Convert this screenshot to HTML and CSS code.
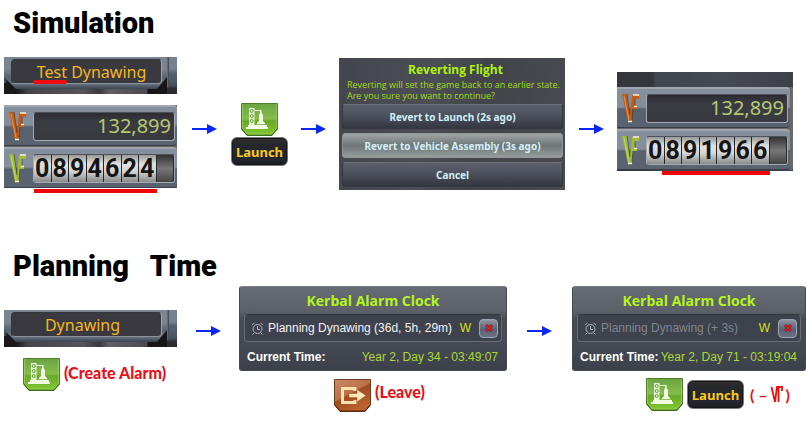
FILE: index.html
```html
<!DOCTYPE html>
<html lang="en">
<head>
<meta charset="utf-8">
<title>Simulation and Planning Time</title>
<link rel="stylesheet" href="styles.css">
</head>
<body>
<svg class="defs" aria-hidden="true">
  <defs>
    <linearGradient id="green" x1="0" y1="0" x2="0" y2="1">
      <stop offset="0" stop-color="#6ba343"/><stop offset=".48" stop-color="#86bd4c"/><stop offset=".54" stop-color="#66a928"/><stop offset="1" stop-color="#84c932"/>
    </linearGradient>
    <linearGradient id="brown" x1="0" y1="0" x2=".6" y2="1">
      <stop offset="0" stop-color="#c98a68"/><stop offset=".5" stop-color="#bb7048"/><stop offset=".54" stop-color="#a04a20"/><stop offset="1" stop-color="#bd642e"/>
    </linearGradient>
    <symbol id="arrow" viewBox="0 0 25 10">
      <path d="M0 5H17" stroke="#0a28f5" stroke-width="2"/><path d="M15 0 25 5 15 10Z" fill="#0a28f5"/>
    </symbol>
    <symbol id="pad" viewBox="0 0 37 33">
      <path d="M.5.5H36.5V26L31 32.500H6L.5 26Z" fill="url(#green)" stroke="#4d7f2a"/>
      <path d="M1 26 6 32H31L36 26" fill="none" stroke="#31600f"/>
      <path d="M1.500 1V25.500L6.500 31H30.500L35.500 25.500V1" fill="none" stroke="#a5d567" stroke-opacity=".6"/>
      <path d="M8 5H13.500V22H8Z" fill="#e9f6d5"/>
      <g fill="none" stroke="#5c9a32"><circle cx="10.700" cy="8" r="1.500"/><circle cx="10.700" cy="13" r="1.500"/><circle cx="10.700" cy="18" r="1.500"/></g>
      <path d="M13 7.500H19" stroke="#e9f6d5"/>
      <path d="M7 22H26V24H27V26H5V24H7Z" fill="#f1fae3"/>
      <path d="M19 7H20.500V10L22 12V18L24 20V22H16V20L18 18V12L19 10Z" fill="#f1fae3"/>
      <path d="M15 21.500H25" stroke="#8fc25c"/>
    </symbol>
    <symbol id="leave" viewBox="0 0 37 33">
      <path d="M.5.5H36.500V26L31 32.500H6L.5 26Z" fill="url(#brown)" stroke="#703a1c"/>
      <path d="M1 26 6 32H31L36 26" fill="none" stroke="#542209"/>
      <path d="M21 12V9.500H8.500V23.500H21V21" fill="none" stroke="#fbe3b0" stroke-width="3"/>
      <path d="M15 14.500H23V10.500L32 16.500 23 23V18.500H15Z" fill="#ffe9b8" stroke="#a2542c" stroke-width=".5"/>
    </symbol>
    <symbol id="root" viewBox="0 0 20 32">
      <path d="M1 2H6L9 23 11 3H18V7H14V14H16V17H14L12 17 11 30H7Z" fill="currentColor"/>
      <path d="M3 4 8 28" stroke="#fff" stroke-opacity=".35"/>
      <path d="M6 2 9 23M14 7V14M12 17 11 28" fill="none" stroke="#222" stroke-opacity=".5"/>
      <path d="M12 3H18M13 14.500H16M7 29.500H11" stroke="#fbf0cf" stroke-width="1.500"/>
    </symbol>
    <symbol id="clock" viewBox="0 0 13 13">
      <g fill="none" stroke="#a9b4bd"><circle cx="6.500" cy="7" r="4.500"/><path d="M6.500 4V7.500H9M1 3 3.500 1M12 3 9.500 1M3 11 1.500 12.500M10 11 11.500 12.500"/></g>
    </symbol>
    <symbol id="cross" viewBox="0 0 10 10">
      <path d="M2 2 8 8M8 2 2 8" stroke="#66202b" stroke-width="3"/><path d="M2 2 8 8M8 2 2 8" stroke="#e8202c" stroke-width="1.500"/>
    </symbol>
    <symbol id="redroot" viewBox="0 0 14 20">
      <path d="M1.500 2 5 17 7 2H12V6M8.500 3V17" fill="none" stroke="#ee0c0c" stroke-width="1.800"/>
    </symbol>
  </defs>
</svg>
<main>
  <section>
    <h1>Simulation</h1>
    <div class="flow simulation">
      <div class="stack">
        <div class="plate"><div class="frame"><div class="plate-name name-long"><span class="marked">Test</span> Dynawing</div></div></div>
        <div class="counter">
          <div class="bank"><svg class="root orange"><use href="#root"/></svg><div class="funds">132,899</div></div>
          <div class="bank"><svg class="root lime"><use href="#root"/></svg><div class="reels"><b>0</b><b>8</b><b>9</b><b>4</b><b>6</b><b>2</b><b>4</b><i></i></div></div>
        </div>
        <div class="underline full"></div>
      </div>
      <svg class="arrow"><use href="#arrow"/></svg>
      <div class="launching">
        <svg class="tile"><use href="#pad"/></svg>
        <button class="launch" type="button">Launch</button>
      </div>
      <svg class="arrow"><use href="#arrow"/></svg>
      <div class="dialog" role="dialog" aria-labelledby="revert-title">
        <h2 id="revert-title">Reverting Flight</h2>
        <p>Reverting will set the game back to an earlier state.<br>Are you sure you want to continue?</p>
        <button type="button">Revert to Launch (2s ago)</button>
        <button class="hover" type="button">Revert to Vehicle Assembly (3s ago)</button>
        <button type="button">Cancel</button>
      </div>
      <svg class="arrow"><use href="#arrow"/></svg>
      <div class="result">
        <div class="scene">
          <div class="counter">
            <div class="bank"><svg class="root orange"><use href="#root"/></svg><div class="funds">132,899</div></div>
            <div class="bank"><svg class="root lime"><use href="#root"/></svg><div class="reels"><b>0</b><b>8</b><b>9</b><b>1</b><b>9</b><b>6</b><b>6</b><i></i></div></div>
          </div>
        </div>
        <div class="underline part"></div>
      </div>
    </div>
  </section>
  <section>
    <h1>Planning&nbsp;&nbsp; Time</h1>
    <div class="flow planning">
      <div class="alarm-step">
        <div class="plate"><div class="frame"><div class="plate-name">Dynawing</div></div></div>
        <div class="action"><svg class="tile"><use href="#pad"/></svg><span>(Create Alarm)</span></div>
      </div>
      <svg class="arrow"><use href="#arrow"/></svg>
      <div class="clock-step">
        <div class="clock">
          <h2>Kerbal Alarm Clock</h2>
          <div class="alarm"><svg class="bell"><use href="#clock"/></svg><span>Planning Dynawing (36d, 5h, 29m)</span><em>W</em><button type="button" aria-label="Delete alarm"><svg><use href="#cross"/></svg></button></div>
          <div class="time"><strong>Current Time:</strong><span>Year 2, Day 34 - 03:49:07</span></div>
        </div>
        <div class="action leave"><svg class="tile"><use href="#leave"/></svg><span>(Leave)</span></div>
      </div>
      <svg class="arrow"><use href="#arrow"/></svg>
      <div class="clock-step">
        <div class="clock">
          <h2>Kerbal Alarm Clock</h2>
          <div class="alarm past"><svg class="bell"><use href="#clock"/></svg><span>Planning Dynawing (+ 3s)</span><em>W</em><button type="button" aria-label="Delete alarm"><svg><use href="#cross"/></svg></button></div>
          <div class="time"><strong>Current Time:</strong><span>Year 2, Day 71 - 03:19:04</span></div>
        </div>
        <div class="action relaunch"><svg class="tile"><use href="#pad"/></svg><button class="launch" type="button">Launch</button><span class="cost">( –<svg><use href="#redroot"/></svg>)</span></div>
      </div>
    </div>
  </section>
</main>
</body>
</html>
```
FILE: styles.css
```css
* { box-sizing: border-box; }
body { margin: 0; background: #fff; font-family: "Noto Sans", sans-serif; }
svg { display: block; }
button { border: 0; padding: 0; font: inherit; }
.defs { position: absolute; width: 0; height: 0; }

h1 {
  margin: 0;
  padding: 4px 0 0 13px;
  font: 900 29px/38px Roboto, sans-serif;
  color: #000;
}
section:first-child { padding-bottom: 50px; }
section:first-child h1 { margin-bottom: 15px; }
section:last-child h1 { margin-bottom: 1px; }

.flow { display: grid; align-items: start; }
.simulation {
  grid-template-columns: 173fr 54fr 57fr 51fr 226fr 52fr 176fr;
  padding: 0 19px 0 4px;
}
.planning {
  grid-template-columns: 173fr 62fr 268fr 65fr 234fr;
  padding: 0 6px 0 4px;
}
.arrow { width: 25px; height: 10px; justify-self: center; }
.simulation .arrow { margin-top: 67px; }
.planning .arrow { margin-top: 40px; }

.plate {
  height: 37px;
  background:
    linear-gradient(90deg, #4c5561, #2b3037) left top / 3px 26px no-repeat,
    linear-gradient(90deg, #6d7783, #3a414b) right 8px top 0 / 2px 30px no-repeat,
    linear-gradient(#77818d 0 12px, #566170 16px, #48525f 28px, #2b2c31 32px, #2a2a2e) right top / 10px 37px no-repeat,
    linear-gradient(90deg, #1a1819 0 12px, #454449 24px, #56545a 80px, #39383d 95px, #615f66 105px, #4c4a50 143px, #171516 144px);
}
.frame {
  height: 32px;
  margin-right: 10px;
  padding: 2px 5px 5px 7px;
  background: linear-gradient(#7b8591 0 12px, #596472 20px, #67727f 27px, #3a434e);
  clip-path: polygon(0 0, 100% 0, 100% 20px, calc(100% - 10px) 100%, 12px 100%, 0 20px);
}
.plate-name {
  height: 25px;
  border: 1px solid #8a929d;
  border-color: #333840 #9aa4af #8a929d #333840;
  border-radius: 4px;
  background: #3a3940;
  color: #f3b620;
  font-size: 16px;
  line-height: 24px;
  text-align: center;
  padding-right: 8px;
}
.plate-name.name-long { padding: 0 0 0 10px; }
.marked { position: relative; }
.marked::after {
  content: "";
  position: absolute;
  left: -4px;
  right: 0;
  bottom: -1px;
  height: 4px;
  border-radius: 2px;
  background: #ee0c0c;
}

.counter { display: grid; gap: 1px; background: #6b6766; }
.stack .counter { margin-top: 11px; }
.bank {
  display: grid;
  grid-template-columns: 29px 1fr;
  align-items: center;
  height: 41px;
  padding-right: 2px;
  border-top: 2px solid #a0a6af;
  border-bottom: 1px solid #39404a;
  border-radius: 0 4px 4px 0;
  background: linear-gradient(#858e9b 0 18px, #59626f 20px, #596370);
}
.root { width: 20px; height: 32px; margin-left: 4px; }
.orange { color: #c75d12; }
.lime { color: #9ebc38; }
.funds, .reels {
  height: 29px;
  border: 1px solid #a3abb4;
  border-top-color: #4b525c;
  border-radius: 3px;
  background: linear-gradient(#2c2b30, #3a3a42 8px, #39393f);
}
.funds {
  padding-right: 3px;
  color: #b7c871;
  font-size: 20px;
  line-height: 26px;
  text-align: right;
}
.reels { display: grid; grid-template-columns: repeat(8, 1fr); overflow: hidden; }
.reels b, .reels i {
  border-right: 1px solid #27282b;
  background: linear-gradient(#999, #e1e1df 9px, #d6d6d6 16px, #88898c);
}
.reels b { color: #151515; font: 700 25px/27px Roboto, sans-serif; text-align: center; }
.reels i { background: linear-gradient(#333, #777, #444); }
.underline { height: 4px; background: #ee0707; }
.full { margin: 1px 20px 0 30px; }
.part { margin: 0 23px 0 45px; }

.launching { display: grid; justify-items: center; margin-top: 46px; gap: 1px; }
.tile { width: 37px; height: 33px; flex: none; }
.launch {
  width: 57px;
  height: 29px;
  border: 1px solid #76787b;
  border-radius: 6px;
  background: linear-gradient(#352d2a, #24282d 6px, #23272d 22px, #17191d);
  box-shadow: inset 0 0 0 1px #15171a;
  color: #fccb20;
  font-size: 13px;
  font-weight: 700;
}

.dialog {
  display: grid;
  gap: 4px;
  margin-top: 1px;
  padding: 5px 2px 3px 3px;
  background: linear-gradient(100deg, #43464c, #4b4e54 40%, #414449 60%, #494b50);
}
.dialog h2 { margin: 0 0 -2px; font: 700 12px/14px "Open Sans", sans-serif; text-align: center; color: #b0f311; padding-left: 6px; }
.dialog p { margin: 0 0 -1px 5px; font: 9px/11px "Open Sans", sans-serif; color: #a3dd16; white-space: nowrap; }
.dialog button {
  height: 25px;
  border: 1px solid #34363e;
  border-top-color: #6b7078;
  border-radius: 3px;
  background: linear-gradient(#5b606c, #4b4f5a 50%, #343740);
  color: #d3eff7;
  font-size: 10px;
  font-weight: 700;
}
.dialog .hover { border-color: #929899; background: linear-gradient(#a0a5a6, #6e7678 50%, #969c9c); }

.result { margin-top: 15px; }
.scene { padding: 15px 0 1px; background: linear-gradient(90deg, #34363b 0 20%, #42464d 22%, #454950 60%, #3e4147); }
.scene .counter { padding-right: 3px; }

.alarm-step { margin-top: 24px; }
.action { display: flex; align-items: center; gap: 4px; color: #e8101a; font: 700 15px/20px "Open Sans", sans-serif; }
.alarm-step .action { padding: 11px 0 0 19px; }
.action > span { font: 900 16px/20px Lato, sans-serif; padding-bottom: 4px; white-space: nowrap; }
.leave { padding: 8px 0 0 95px; }
.leave > span { padding-bottom: 7px; }
.relaunch { padding: 7px 0 0 74px; }
.relaunch .launch { margin-right: 2px; }
.cost { display: flex; align-items: center; gap: 2px; }
.action > .cost { padding: 0; font-weight: 700; }
.cost svg { width: 14px; height: 20px; }

.clock {
  height: 85px;
  border: 1px solid #454850;
  border-top-color: #7a7d85;
  border-radius: 3px;
  background: linear-gradient(#676b74, #5c6069 24px, #484c56 32px, #454954 60px, #3c404a);
}
.clock h2 { margin: 0; padding-top: 4px; font: 700 14px/20px "Open Sans", sans-serif; color: #b4f51a; text-align: center; }
.alarm {
  display: flex;
  align-items: center;
  height: 28px;
  margin: 3px 4px 0;
  padding: 0 3px 0 6px;
  border: 1px solid #686c75;
  border-top-color: #343841;
  border-radius: 4px;
  background: #3e424c;
  color: #f3f3f4;
  font: 12px/16px "Liberation Sans", sans-serif;
  white-space: nowrap;
}
.bell { width: 13px; height: 13px; margin-right: 4px; flex: none; }
.alarm em { margin-left: auto; margin-right: 8px; color: #d5e31c; font-style: normal; }
.alarm button {
  display: grid;
  place-items: center;
  width: 19px;
  height: 19px;
  border: 1px solid #9ca3b1;
  border-radius: 4px;
  background: linear-gradient(#8d95a5, #5a6272 55%, #697182);
}
.alarm button svg { width: 10px; height: 10px; }
.past > span { color: #80858d; }
.time {
  display: flex;
  justify-content: space-between;
  padding: 6px 8px 0 7px;
  color: #acd735;
  font: 12px/18px "Liberation Sans", sans-serif;
  white-space: nowrap;
}
.time strong { color: #fff; }
```
